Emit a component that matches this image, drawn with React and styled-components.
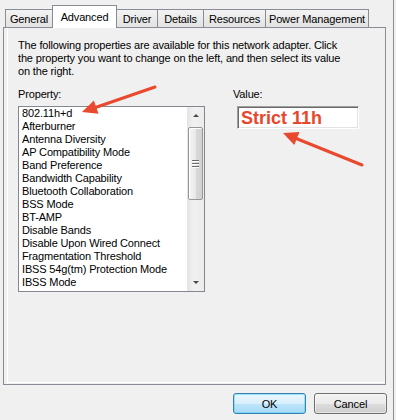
import React from 'react';
import styled, { createGlobalStyle } from 'styled-components';

const Global = createGlobalStyle`
  html, body { margin: 0; padding: 0; background: #f0f0f0; }
  body {
    font-family: "Liberation Sans", Arial, sans-serif;
    font-size: 11px;
    letter-spacing: -0.15px;
    color: #000;
  }
`;

const Window = styled.div`
  position: relative;
  width: 394px;
  height: 420px;
  box-sizing: border-box;
  border-right: 1px solid #8e8f91;
  background: #f0f0f0;
  display: flex;
  flex-direction: column;
  overflow: hidden;
`;

const TabBar = styled.div`
  display: flex;
  align-items: flex-end;
  height: 27px;
  padding-left: 5px;
  position: relative;
  z-index: 2;
`;

const Tab = styled.div`
  box-sizing: border-box;
  width: ${p => p.$w}px;
  height: ${p => (p.$selected ? 23 : 18)}px;
  margin-left: ${p => (p.$first ? 0 : -1)}px;
  margin-bottom: ${p => (p.$selected ? -1 : 0)}px;
  border: 1px solid #898c95;
  border-bottom: none;
  background: ${p => (p.$selected ? '#ffffff' : 'linear-gradient(#f3f3f3, #e2e2e2)')};
  display: flex;
  align-items: center;
  justify-content: center;
  padding-bottom: ${p => (p.$selected ? 1 : 0)}px;
  position: relative;
  z-index: ${p => (p.$selected ? 1 : 0)};
  white-space: nowrap;
`;

const Panel = styled.div`
  margin-left: 3px;
  width: 383px;
  height: 358px;
  box-sizing: border-box;
  border: 1px solid #898c95;
  background: #f0f0f0;
  padding: 11px 0 0 14px;
  box-shadow: inset 3px 0 0 #f0f0f0, inset 4px 0 0 #ffffff,
    inset 0 -1px 0 #f0f0f0, inset 0 -2px 0 #ffffff;
`;

const Intro = styled.p`
  margin: 0;
  line-height: 13px;
  white-space: nowrap;
`;

const Columns = styled.div`
  display: flex;
  margin-top: 10px;
`;

const Column = styled.div`
  display: flex;
  flex-direction: column;
  width: ${p => (p.$w ? `${p.$w}px` : 'auto')};
  margin-left: ${p => p.$ml || 0}px;
`;

const Label = styled.div`
  line-height: 13px;
  height: 13px;
`;

const ListBox = styled.div`
  margin-top: 5px;
  box-sizing: border-box;
  width: 187px;
  height: 186px;
  border: 1px solid #828790;
  background: #fff;
  display: flex;
`;

const Items = styled.div`
  flex: 1;
  padding: 0 0 0 3px;
  overflow: hidden;
`;

const Item = styled.div`
  line-height: 13px;
  height: 13px;
  white-space: nowrap;
`;

const ScrollBar = styled.div`
  width: 17px;
  display: flex;
  flex-direction: column;
  background: linear-gradient(to right, #e4e4e4, #f1f1f1 40%, #ececec);
`;

const ScrollBtn = styled.div`
  height: 17px;
  display: flex;
  align-items: center;
  justify-content: center;
  flex: none;
`;

const Tri = styled.div`
  width: 0;
  height: 0;
  border-left: 3px solid transparent;
  border-right: 3px solid transparent;
  ${p => (p.$down ? 'border-top: 3px solid #4a4a4a;' : 'border-bottom: 3px solid #4a4a4a;')}
`;

const Track = styled.div`
  flex: 1;
`;

const Thumb = styled.div`
  box-sizing: border-box;
  margin: 3px 0 0 1px;
  width: 15px;
  height: 73px;
  border: 1px solid #979797;
  border-radius: 2px;
  background: linear-gradient(to right, #f4f4f4, #e9e9e9 50%, #d8d8d8 51%, #d2d2d2);
  box-shadow: inset 1px 1px 0 #fff;
  display: flex;
  flex-direction: column;
  align-items: center;
  justify-content: center;
  gap: 1px;
`;

const Grip = styled.div`
  width: 7px;
  height: 1px;
  background: #6b6b6b;
  box-shadow: 0 1px 0 #fff;
  margin: 0.5px 0;
`;

const ValueBox = styled.div`
  margin: 5px 0 0 4px;
  box-sizing: border-box;
  width: 122px;
  height: 23px;
  background: #fff;
  border-top: 1px solid #a0a0a0;
  border-left: 1px solid #a0a0a0;
  border-right: 1px solid #fff;
  border-bottom: 1px solid #fff;
  box-shadow: inset 1px 1px 0 #696969, inset -1px -1px 0 #e3e3e3;
  padding: 1px 0 0 3px;
  font-weight: bold;
  font-size: 18px;
  letter-spacing: 0;
  line-height: 20px;
  color: #e8472d;
  white-space: nowrap;
`;

const ButtonRow = styled.div`
  display: flex;
  justify-content: flex-end;
  gap: 8px;
  margin-top: 8px;
  padding-right: 6px;
`;

const Button = styled.div`
  box-sizing: border-box;
  width: 73px;
  height: 21px;
  border-radius: 3px;
  border: 1px solid ${p => (p.$default ? '#3c7fb1' : '#707070')};
  background: ${p =>
    p.$default
      ? 'linear-gradient(#eaf6fd, #d9f0fc 50%, #bee6fd 51%, #a7d9f5)'
      : 'linear-gradient(#f2f2f2, #ebebeb 50%, #dddddd 51%, #cfcfcf)'};
  box-shadow: inset 0 0 0 1px ${p => (p.$default ? '#48d2f6' : '#fcfcfc')}80;
  display: flex;
  align-items: center;
  justify-content: center;
`;

const Overlay = styled.svg`
  position: absolute;
  left: 0;
  top: 0;
  pointer-events: none;
`;

const tabs = [
  { label: 'General', w: 48 },
  { label: 'Advanced', w: 65, selected: true },
  { label: 'Driver', w: 42 },
  { label: 'Details', w: 47 },
  { label: 'Resources', w: 63 },
  { label: 'Power Management', w: 104 },
];

const items = [
  '802.11h+d',
  'Afterburner',
  'Antenna Diversity',
  'AP Compatibility Mode',
  'Band Preference',
  'Bandwidth Capability',
  'Bluetooth Collaboration',
  'BSS Mode',
  'BT-AMP',
  'Disable Bands',
  'Disable Upon Wired Connect',
  'Fragmentation Threshold',
  'IBSS 54g(tm) Protection Mode',
  'IBSS Mode',
];

const RED = '#e9492e';

export default function App() {
  return (
    <>
      <Global />
      <Window>
        <TabBar>
          {tabs.map((t, i) => (
            <Tab key={t.label} $w={t.w} $selected={t.selected} $first={i === 0}>
              {t.label}
            </Tab>
          ))}
        </TabBar>
        <Panel>
          <Intro>
            The following properties are available for this network adapter. Click
            <br />
            the property you want to change on the left, and then select its value
            <br />
            on the right.
          </Intro>
          <Columns>
            <Column $w={187}>
              <Label>Property:</Label>
              <ListBox>
                <Items>
                  {items.map(it => (
                    <Item key={it}>{it}</Item>
                  ))}
                </Items>
                <ScrollBar>
                  <ScrollBtn>
                    <Tri />
                  </ScrollBtn>
                  <Track>
                    <Thumb>
                      <Grip />
                      <Grip />
                      <Grip />
                    </Thumb>
                  </Track>
                  <ScrollBtn>
                    <Tri $down />
                  </ScrollBtn>
                </ScrollBar>
              </ListBox>
            </Column>
            <Column $ml={28}>
              <Label>Value:</Label>
              <ValueBox>Strict 11h</ValueBox>
            </Column>
          </Columns>
        </Panel>
        <ButtonRow>
          <Button $default>OK</Button>
          <Button>Cancel</Button>
        </ButtonRow>
        <Overlay width="396" height="420" viewBox="0 0 396 420">
          <line x1="155" y1="87" x2="94" y2="108" stroke={RED} strokeWidth="3" strokeLinecap="round" />
          <polygon points="82,112 98.5,113.7 93.9,100.5" fill={RED} />
          <line x1="362" y1="165" x2="295" y2="138" stroke={RED} strokeWidth="3" strokeLinecap="round" />
          <polygon points="283,133 299.5,132.1 294.3,145.1" fill={RED} />
        </Overlay>
      </Window>
    </>
  );
}
